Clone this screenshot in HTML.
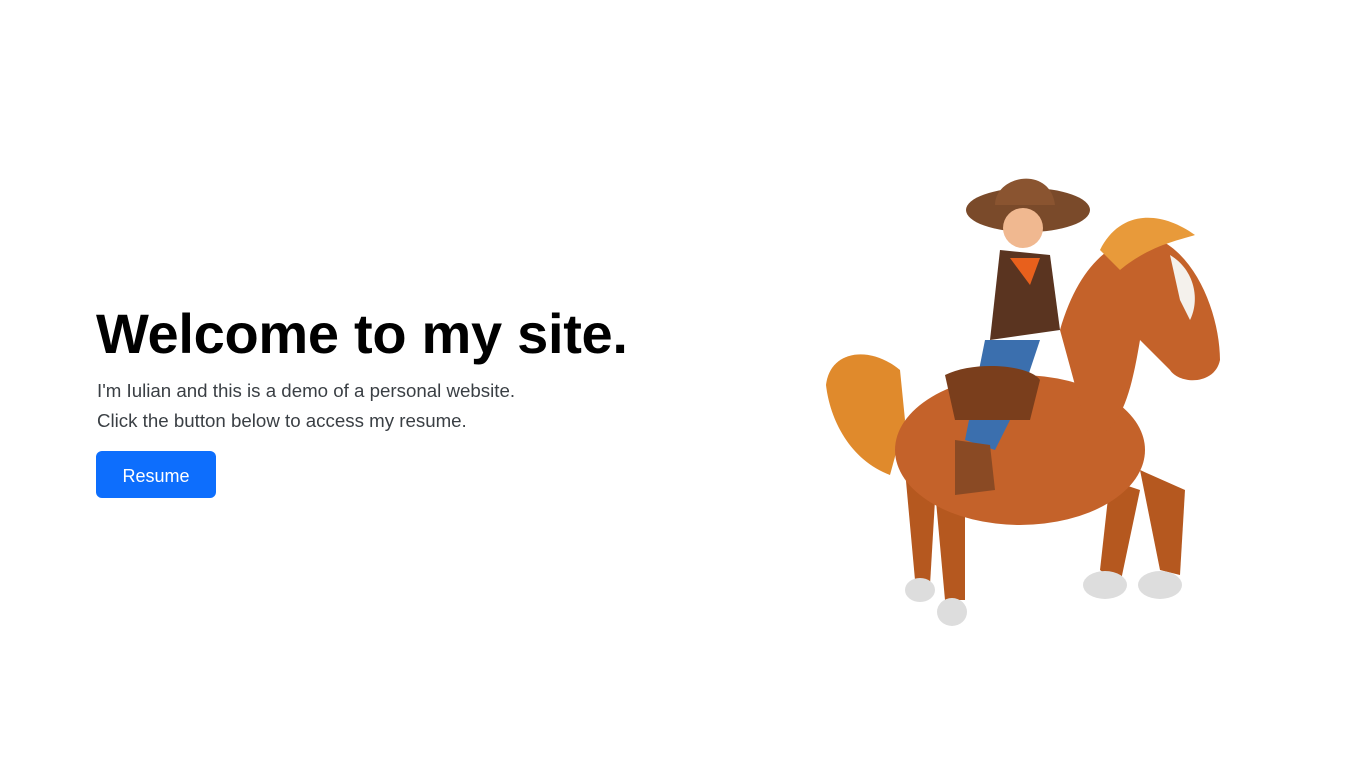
<!DOCTYPE html>
<html><head><meta charset="utf-8"><style>
html,body{margin:0;background:#fff;width:1353px;height:759px;overflow:hidden;font-family:"Liberation Sans",sans-serif}
h1{position:absolute;left:96px;top:298px;margin:0;font-size:56px;font-weight:700;color:#000;line-height:72px;letter-spacing:-0.3px}
p{position:absolute;left:97px;margin:0;font-size:18.7px;color:#3a3f44;line-height:30px}
.btn{position:absolute;left:96px;top:451px;width:120px;height:47px;background:#0d6efd;border-radius:6px;color:#fff;font-size:18px;line-height:50px;text-align:center}
svg{position:absolute;left:0;top:0}
</style></head><body>
<h1>Welcome to my site.</h1>
<p style="top:376px">I'm Iulian and this is a demo of a personal website.</p>
<p style="top:406px">Click the button below to access my resume.</p>
<div class="btn">Resume</div>
<svg width="1353" height="759">
<path d="M900 370 C870 345 830 350 826 385 C830 420 850 460 890 475 L905 420 Z" fill="#e08a2c"/>
<path d="M905 470 L915 580 L930 585 L935 500 Z" fill="#b5581f"/>
<path d="M935 490 L945 600 L965 600 L965 500 Z" fill="#b5581f"/>
<path d="M1110 480 L1100 570 L1120 585 L1140 490 Z" fill="#b5581f"/>
<path d="M1140 470 L1160 570 L1180 575 L1185 490 Z" fill="#b5581f"/>
<ellipse cx="920" cy="590" rx="15" ry="12" fill="#ddd"/>
<ellipse cx="952" cy="612" rx="15" ry="14" fill="#ddd"/>
<ellipse cx="1105" cy="585" rx="22" ry="14" fill="#ddd"/>
<ellipse cx="1160" cy="585" rx="22" ry="14" fill="#ddd"/>
<ellipse cx="1020" cy="450" rx="125" ry="75" fill="#c4622a"/>
<path d="M1060 330 C1080 260 1120 230 1160 240 C1200 260 1220 320 1220 360 C1215 385 1180 385 1170 370 L1140 340 C1130 400 1120 430 1090 440 Z" fill="#c4622a"/>
<path d="M1100 250 C1120 210 1160 210 1195 235 C1180 240 1150 245 1120 270 Z" fill="#e89a3a"/>
<path d="M1170 255 C1195 270 1200 300 1190 320 L1180 300 Z" fill="#f4f1ec"/>
<path d="M1000 250 L1050 255 L1060 330 L990 340 Z" fill="#5a3420"/>
<path d="M985 340 L1040 340 L1020 400 L995 450 L965 440 Z" fill="#3b6fae"/>
<path d="M955 440 L990 445 L995 490 L955 495 Z" fill="#8a4a24"/>
<ellipse cx="1028" cy="210" rx="62" ry="22" fill="#7a4a2a"/>
<path d="M995 205 C995 175 1050 165 1055 205 Z" fill="#8a5430"/>
<circle cx="1023" cy="228" r="20" fill="#f0b890"/>
<path d="M1010 258 L1040 258 L1030 285 Z" fill="#e8601c"/>
<path d="M945 375 C975 360 1030 365 1040 380 L1030 420 L955 420 Z" fill="#7a3e1c"/>
</svg>
</body></html>
